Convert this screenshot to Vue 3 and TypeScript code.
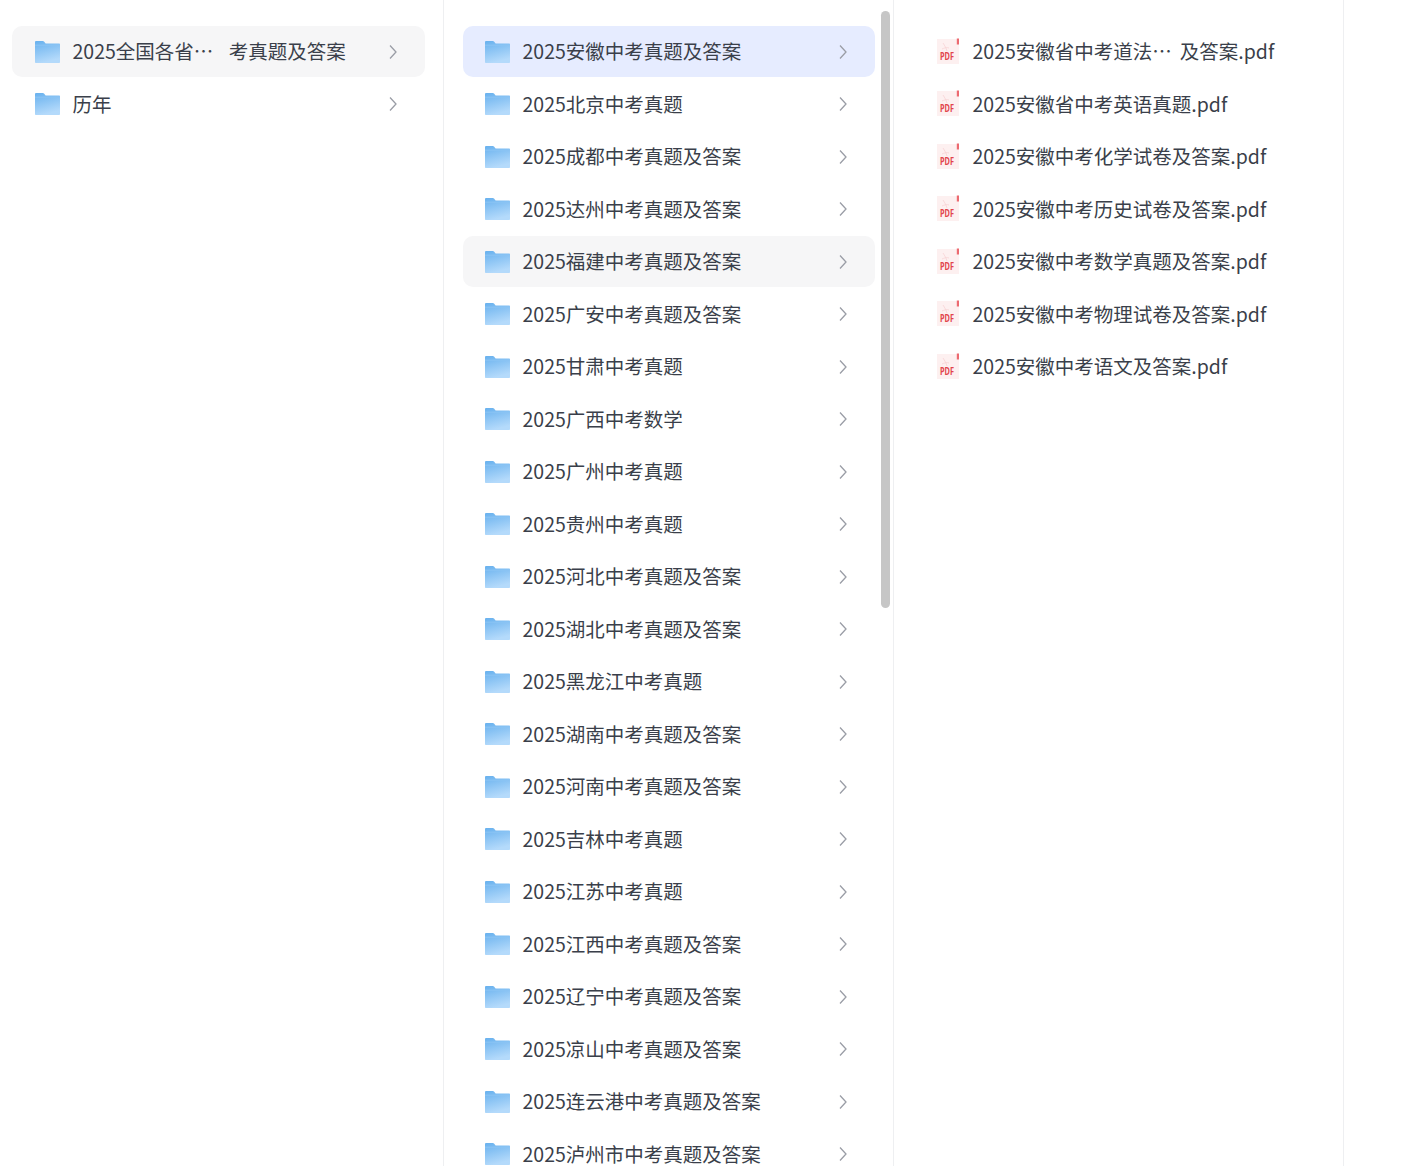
<script setup lang="ts">
const first: string[] = ['历年']
const middle: string[] = [
  '2025安徽中考真题及答案','2025北京中考真题','2025成都中考真题及答案','2025达州中考真题及答案',
  '2025福建中考真题及答案','2025广安中考真题及答案','2025甘肃中考真题','2025广西中考数学','2025广州中考真题',
  '2025贵州中考真题','2025河北中考真题及答案','2025湖北中考真题及答案','2025黑龙江中考真题','2025湖南中考真题及答案',
  '2025河南中考真题及答案','2025吉林中考真题','2025江苏中考真题','2025江西中考真题及答案','2025辽宁中考真题及答案',
  '2025凉山中考真题及答案','2025连云港中考真题及答案','2025泸州市中考真题及答案',
]
const files: string[] = [
  '2025安徽省中考英语真题.pdf','2025安徽中考化学试卷及答案.pdf','2025安徽中考历史试卷及答案.pdf',
  '2025安徽中考数学真题及答案.pdf','2025安徽中考物理试卷及答案.pdf','2025安徽中考语文及答案.pdf',
]
function rowClass(i: number): string {
  if (i === 0) return 'row active'
  if (i === 4) return 'row hover'
  return 'row'
}
</script>

<template>
  <div class="page">
    <section class="col col-a">
      <div class="row hover">
        <svg class="folder" viewBox="0 0 25 22"><defs><linearGradient id="fa" x1="0" y1="0" x2="0.3" y2="1"><stop offset="0" stop-color="#68b1ee"/><stop offset="1" stop-color="#b4dafb"/></linearGradient></defs><path d="M0 1.2C0 .5.5 0 1.2 0h6.6c.5 0 .9.2 1.2.6L10.6 2.6H24c.6 0 1 .4 1 1V21c0 .6-.4 1-1 1H1c-.6 0-1-.4-1-1z" fill="url(#fa)"/><path d="M0 4.2h25" stroke="#8cc4f4" stroke-width="1"/></svg>
        <span class="name split"><span>2025全国各省⋯</span><span>考真题及答案</span></span>
        <svg class="chev" viewBox="0 0 10 16"><path d="M2 1.5 8 8l-6 6.5" /></svg>
      </div>
      <div v-for="t in first" :key="t" class="row">
        <svg class="folder" viewBox="0 0 25 22"><path d="M0 1.2C0 .5.5 0 1.2 0h6.6c.5 0 .9.2 1.2.6L10.6 2.6H24c.6 0 1 .4 1 1V21c0 .6-.4 1-1 1H1c-.6 0-1-.4-1-1z" fill="url(#fa)"/><path d="M0 4.2h25" stroke="#8cc4f4" stroke-width="1"/></svg>
        <span class="name">{{ t }}</span>
        <svg class="chev" viewBox="0 0 10 16"><path d="M2 1.5 8 8l-6 6.5" /></svg>
      </div>
    </section>

    <section class="col col-b">
      <div v-for="(t, i) in middle" :key="t" :class="rowClass(i)">
        <svg class="folder" viewBox="0 0 25 22"><path d="M0 1.2C0 .5.5 0 1.2 0h6.6c.5 0 .9.2 1.2.6L10.6 2.6H24c.6 0 1 .4 1 1V21c0 .6-.4 1-1 1H1c-.6 0-1-.4-1-1z" fill="url(#fa)"/><path d="M0 4.2h25" stroke="#8cc4f4" stroke-width="1"/></svg>
        <span class="name">{{ t }}</span>
        <svg class="chev" viewBox="0 0 10 16"><path d="M2 1.5 8 8l-6 6.5" /></svg>
      </div>
      <div class="scrollbar"></div>
    </section>

    <section class="col col-c">
      <div class="row file">
        <svg class="pdf" viewBox="0 0 22 26"><path d="M0 1h19.5L22 3.5V26H0z" fill="#fdf0f0"/><path d="M19.8 .5H22v6h-2.2z" fill="#ec6a70"/><path d="M6 5c2 3 3 5 4 8M5 11c2-1 5-2 7-1" stroke="#f7d3d4" stroke-width=".8" fill="none"/><text x="3" y="22" textLength="14" lengthAdjust="spacingAndGlyphs" class="pdf-text">PDF</text></svg>
        <span class="name split narrow"><span>2025安徽省中考道法⋯</span><span>及答案.pdf</span></span>
      </div>
      <div v-for="t in files" :key="t" class="row file">
        <svg class="pdf" viewBox="0 0 22 26"><path d="M0 1h19.5L22 3.5V26H0z" fill="#fdf0f0"/><path d="M19.8 .5H22v6h-2.2z" fill="#ec6a70"/><path d="M6 5c2 3 3 5 4 8M5 11c2-1 5-2 7-1" stroke="#f7d3d4" stroke-width=".8" fill="none"/><text x="3" y="22" textLength="14" lengthAdjust="spacingAndGlyphs" class="pdf-text">PDF</text></svg>
        <span class="name">{{ t }}</span>
      </div>
    </section>
  </div>
</template>

<style scoped>
.page {
  display: flex;
  height: 1166px;
  overflow: hidden;
  background: #fff;
  font-family: "Noto Sans CJK SC", "Noto Sans", sans-serif;
  color: #3a3f4a;
}
.col {
  position: relative;
  flex: none;
  box-sizing: border-box;
  height: 1166px;
  padding-top: 26px;
  border-right: 1px solid #eeeff1;
  overflow: hidden;
  display: flex;
  flex-direction: column;
  gap: 1.5px;
}
.col-a { width: 444px; padding-left: 12px; padding-right: 18px; }
.col-b { width: 450px; padding-left: 19px; padding-right: 18px; }
.col-c { width: 450px; padding-left: 19px; padding-right: 18px; }
.row {
  flex: none;
  display: flex;
  align-items: center;
  height: 51px;
  padding-left: 22px;
  padding-right: 27px;
  border-radius: 10px;
}
.col-a .row { padding-left: 23px; }
.active { background: #e6ecff; }
.hover { background: #f6f6f7; }
.folder { width: 25px; height: 22px; flex: none; }
.name {
  margin-left: 12.5px;
  margin-top: -1px;
  flex: 1;
  font-size: 19.5px;
  line-height: 26px;
  white-space: nowrap;
}
.split { display: flex; gap: 15.5px; }
.narrow { gap: 8px; }
.chev {
  flex: none;
  width: 10px;
  height: 16px;
  fill: none;
  stroke: #9a9da6;
  stroke-width: 1.3;
}
.file { padding-left: 24px; }
.pdf { width: 22px; height: 26px; flex: none; margin-top: -2px; margin-left: -0.5px; }
.file .name { margin-left: 14px; }
.pdf-text {
  font-family: "Noto Sans", sans-serif;
  font-size: 10.5px;
  font-weight: 700;
  fill: #e2454c;
}
.scrollbar {
  position: absolute;
  left: 437px;
  top: 11px;
  width: 9px;
  height: 597px;
  border-radius: 5px;
  background: #c6c6c6;
}
</style>

<style>
html, body { overflow: hidden; background: #fff; }
</style>
